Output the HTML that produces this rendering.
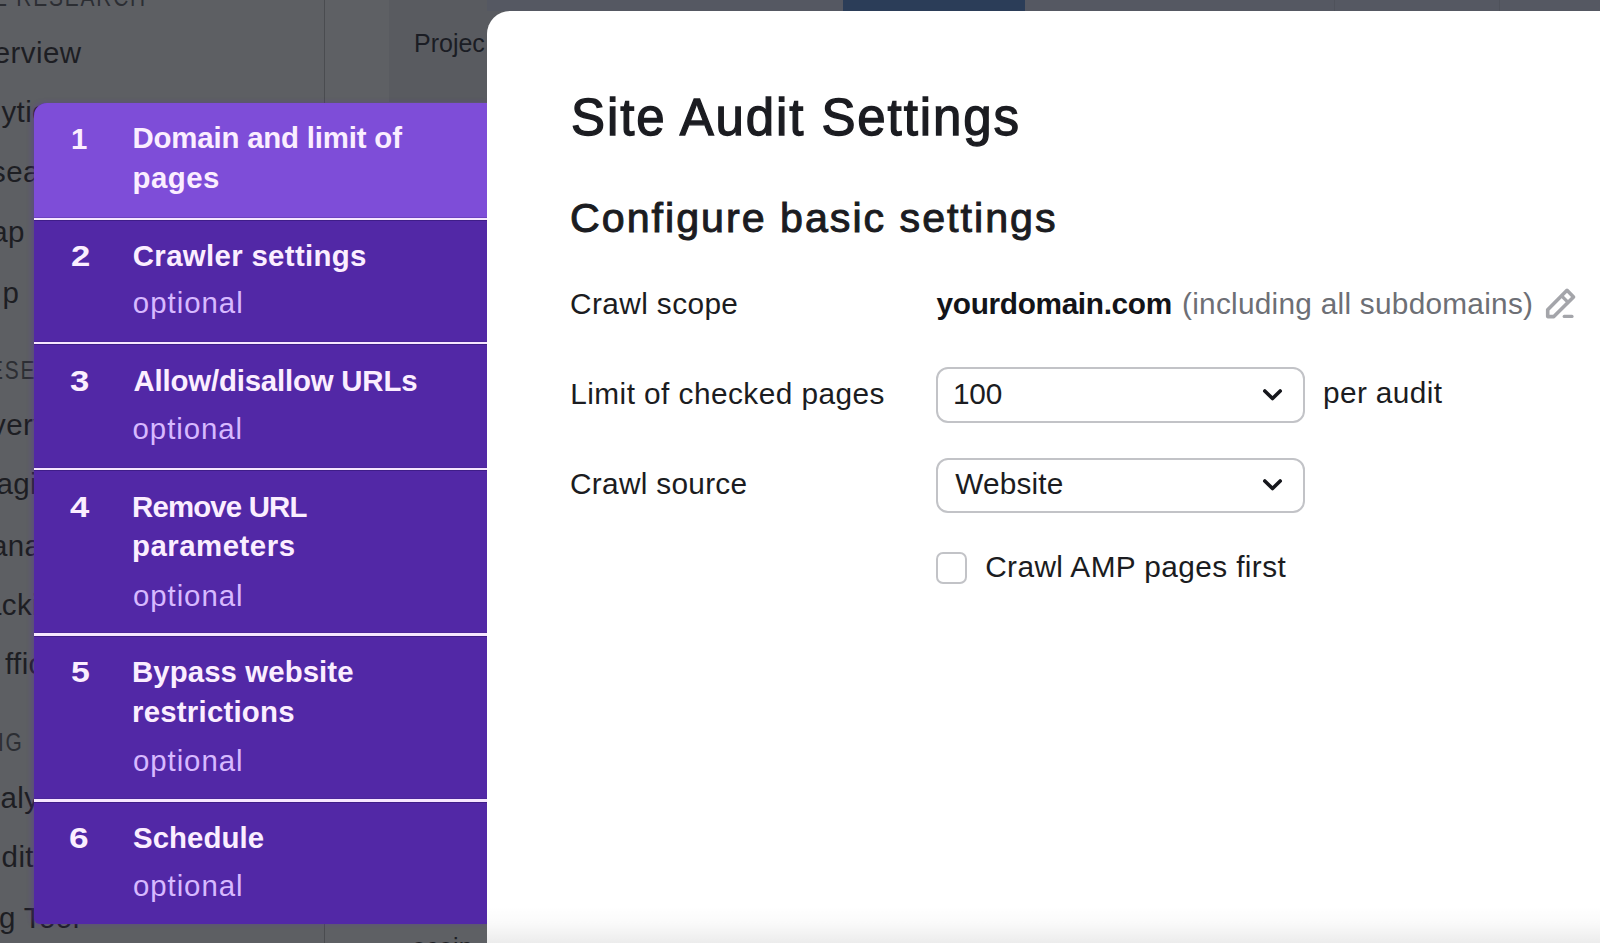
<!DOCTYPE html>
<html><head><meta charset="utf-8">
<style>
html,body{margin:0;padding:0;width:1600px;height:943px;overflow:hidden;background:#5d5f63;font-family:"Liberation Sans",sans-serif;}
.a{position:absolute;}
.t{position:absolute;line-height:1;white-space:nowrap;}
.nav{position:absolute;line-height:1;white-space:nowrap;color:#1c1d21;font-size:30px;letter-spacing:0.6px;}
.navh{position:absolute;line-height:1;white-space:nowrap;color:#424449;font-size:25px;letter-spacing:1.5px;}
.sep{position:absolute;left:34px;width:453px;height:2.6px;background:#f6e6ff;box-shadow:0 1px 0 rgba(40,15,100,0.45),0 -1px 0 rgba(60,30,120,0.25);}
</style></head>
<body>
<!-- background app (dimmed) -->
<div class="a" style="left:0;top:0;width:324px;height:943px;background:#5d5f63"></div>
<div class="a" style="left:324px;top:0;width:1.2px;height:943px;background:#4a4c50"></div>
<div class="a" style="left:325px;top:0;width:64px;height:943px;background:#5e6064"></div>
<div class="a" style="left:389px;top:0;width:1211px;height:102px;background:#595b60"></div>
<div class="a" style="left:325px;top:102px;width:1275px;height:841px;background:#5e6064"></div>
<div class="a" style="left:487px;top:0;width:1113px;height:11px;background:#555862"></div>
<div class="a" style="left:843px;top:0;width:182px;height:11px;background:#2b3d58"></div>
<div class="a" style="left:1334px;top:0;width:1px;height:11px;background:#4f525b"></div>
<div class="a" style="left:1499px;top:0;width:1px;height:11px;background:#4f525b"></div>
<div class="t" id="proj" style="left:414.00px;top:30.50px;font-size:25.00px;font-weight:400;color:#1b1d24;letter-spacing:0.000px;">Projec</div>

<div class="t" id="nvh0" style="left:-7.00px;top:-15.00px;font-size:25.50px;color:#2c2e33;letter-spacing:2.20px;transform:scaleX(0.82);transform-origin:0 0;">E RESEARCH</div>
<div class="t" id="nv1" style="left:-6.20px;top:37.81px;font-size:29.50px;color:#1d1e23;letter-spacing:0.40px;">erview</div>
<div class="t" id="nv2" style="left:1.40px;top:96.81px;font-size:29.50px;color:#1d1e23;letter-spacing:0.40px;">ytics</div>
<div class="t" id="nv3" style="left:-9.00px;top:157.01px;font-size:29.50px;color:#1d1e23;letter-spacing:0.40px;">search</div>
<div class="t" id="nv4" style="left:-8.80px;top:217.01px;font-size:29.50px;color:#1d1e23;letter-spacing:0.40px;">ap</div>
<div class="t" id="nv5" style="left:2.60px;top:277.51px;font-size:29.50px;color:#1d1e23;letter-spacing:0.40px;">p</div>
<div class="t" id="nvh1" style="left:-11.40px;top:357.81px;font-size:25.50px;color:#2c2e33;letter-spacing:2.20px;transform:scaleX(0.82);transform-origin:0 0;">ESEARCH</div>
<div class="t" id="nv6" style="left:-9.00px;top:410.31px;font-size:29.50px;color:#1d1e23;letter-spacing:0.40px;">verview</div>
<div class="t" id="nv7" style="left:-3.60px;top:469.01px;font-size:29.50px;color:#1d1e23;letter-spacing:0.40px;">agic</div>
<div class="t" id="nv8" style="left:-9.00px;top:530.51px;font-size:29.50px;color:#1d1e23;letter-spacing:0.40px;">anager</div>
<div class="t" id="nv9" style="left:-15.00px;top:589.81px;font-size:29.50px;color:#1d1e23;letter-spacing:0.40px;">acking</div>
<div class="t" id="nv10" style="left:5.00px;top:649.01px;font-size:29.50px;color:#1d1e23;letter-spacing:0.40px;">ffic</div>
<div class="t" id="nvh2" style="left:-1.60px;top:730.32px;font-size:25.50px;color:#2c2e33;letter-spacing:2.20px;transform:scaleX(0.82);transform-origin:0 0;">IG</div>
<div class="t" id="nv11" style="left:0.40px;top:783.01px;font-size:29.50px;color:#1d1e23;letter-spacing:0.40px;">alytics</div>
<div class="t" id="nv12" style="left:1.60px;top:842.40px;font-size:29.50px;color:#1d1e23;letter-spacing:0.40px;">dit</div>
<div class="t" id="nv13" style="left:-1.00px;top:902.71px;font-size:29.50px;color:#1d1e23;letter-spacing:0.40px;">g Tool</div>
<div class="t" id="nv14" style="left:412.00px;top:934.80px;font-size:25.00px;color:#1d1e23;letter-spacing:0.20px;">ocein</div>
<div class="a" style="left:324px;top:924px;width:1.2px;height:19px;background:#4a4c50"></div>

<!-- sidebar -->
<div class="a" style="left:34px;top:102.5px;width:453px;height:821px;background:#5228a6;border-radius:13px 0 0 6px;overflow:hidden;box-shadow:-2px 0 5px rgba(90,50,170,0.45)">
  <div class="a" style="left:0;top:0;width:453px;height:116px;background:#7e4dd8"></div>
</div>
<div class="sep" style="top:217.6px"></div>
<div class="sep" style="top:341.9px"></div>
<div class="sep" style="top:467.7px"></div>
<div class="sep" style="top:633.4px"></div>
<div class="sep" style="top:799.2px"></div>
<div class="t" id="n1" style="left:71.00px;top:123.76px;font-size:29.40px;font-weight:700;color:#fbeeff;letter-spacing:0.000px;">1</div>
<div class="t" id="t1a" style="left:132.50px;top:123.21px;font-size:29.40px;font-weight:700;color:#fbeeff;letter-spacing:-0.181px;">Domain and limit of</div>
<div class="t" id="t1b" style="left:132.50px;top:163.21px;font-size:29.40px;font-weight:700;color:#fbeeff;letter-spacing:0.500px;">pages</div>
<div class="t" id="n2" style="left:70.50px;top:241.01px;font-size:29.40px;font-weight:700;color:#fbeeff;letter-spacing:0.000px;transform:scaleX(1.18);transform-origin:0 0;">2</div>
<div class="t" id="t2" style="left:132.80px;top:241.01px;font-size:29.40px;font-weight:700;color:#fbeeff;letter-spacing:0.333px;">Crawler settings</div>
<div class="t" id="o2" style="left:132.80px;top:288.21px;font-size:29.40px;font-weight:400;color:#d7b9ff;letter-spacing:1.000px;">optional</div>
<div class="t" id="n3" style="left:70.20px;top:365.61px;font-size:29.40px;font-weight:700;color:#fbeeff;letter-spacing:0.000px;transform:scaleX(1.18);transform-origin:0 0;">3</div>
<div class="t" id="t3" style="left:133.60px;top:365.61px;font-size:29.40px;font-weight:700;color:#fbeeff;letter-spacing:-0.194px;">Allow/disallow URLs</div>
<div class="t" id="o3" style="left:132.60px;top:414.31px;font-size:29.40px;font-weight:400;color:#d7b9ff;letter-spacing:0.929px;">optional</div>
<div class="t" id="n4" style="left:69.80px;top:491.61px;font-size:29.40px;font-weight:700;color:#fbeeff;letter-spacing:0.000px;transform:scaleX(1.18);transform-origin:0 0;">4</div>
<div class="t" id="t4a" style="left:132.00px;top:491.61px;font-size:29.40px;font-weight:700;color:#fbeeff;letter-spacing:-0.833px;">Remove URL</div>
<div class="t" id="t4b" style="left:132.00px;top:531.21px;font-size:29.40px;font-weight:700;color:#fbeeff;letter-spacing:0.500px;">parameters</div>
<div class="t" id="o4" style="left:133.00px;top:580.61px;font-size:29.40px;font-weight:400;color:#d7b9ff;letter-spacing:0.929px;">optional</div>
<div class="t" id="n5" style="left:70.50px;top:656.61px;font-size:29.40px;font-weight:700;color:#fbeeff;letter-spacing:0.000px;transform:scaleX(1.15);transform-origin:0 0;">5</div>
<div class="t" id="t5a" style="left:132.00px;top:656.61px;font-size:29.40px;font-weight:700;color:#fbeeff;letter-spacing:0.077px;">Bypass website</div>
<div class="t" id="t5b" style="left:132.00px;top:696.91px;font-size:29.40px;font-weight:700;color:#fbeeff;letter-spacing:0.227px;">restrictions</div>
<div class="t" id="o5" style="left:133.00px;top:745.61px;font-size:29.40px;font-weight:400;color:#d7b9ff;letter-spacing:0.929px;">optional</div>
<div class="t" id="n6" style="left:68.80px;top:822.51px;font-size:29.40px;font-weight:700;color:#fbeeff;letter-spacing:0.000px;transform:scaleX(1.2);transform-origin:0 0;">6</div>
<div class="t" id="t6" style="left:133.00px;top:822.51px;font-size:29.40px;font-weight:700;color:#fbeeff;letter-spacing:0.071px;">Schedule</div>
<div class="t" id="o6" style="left:133.00px;top:871.26px;font-size:29.40px;font-weight:400;color:#d7b9ff;letter-spacing:0.929px;">optional</div>

<!-- modal panel -->
<div class="a" style="left:486.5px;top:11px;width:1200px;height:1000px;background:#fff;border-radius:23px 0 0 0;"></div>
<div class="a" style="left:487px;top:906px;width:1113px;height:37px;background:linear-gradient(to bottom,rgba(0,0,0,0) 0%,rgba(0,0,0,0.02) 45%,rgba(0,0,0,0.075) 100%)"></div>
<div class="t" id="title" style="left:571.00px;top:92.01px;font-size:51.00px;font-weight:400;color:#1b1c21;letter-spacing:1.889px;-webkit-text-stroke:1.3px #1b1c21;">Site Audit Settings</div>
<div class="t" id="sub" style="left:570.00px;top:198.00px;font-size:41.20px;font-weight:400;color:#1b1c21;letter-spacing:2.000px;-webkit-text-stroke:1.0px #1b1c21;">Configure basic settings</div>
<div class="t" id="lab1" style="left:570.00px;top:288.51px;font-size:29.80px;font-weight:400;color:#1b1c21;letter-spacing:0.400px;">Crawl scope</div>
<div class="t" id="lab2" style="left:570.20px;top:378.60px;font-size:29.80px;font-weight:400;color:#1b1c21;letter-spacing:0.452px;">Limit of checked pages</div>
<div class="t" id="lab3" style="left:570.00px;top:469.01px;font-size:29.80px;font-weight:400;color:#1b1c21;letter-spacing:0.295px;">Crawl source</div>
<div class="t" id="dom" style="left:936.60px;top:289.01px;font-size:29.80px;font-weight:700;color:#131419;letter-spacing:-0.346px;">yourdomain.com</div>
<div class="t" id="inc" style="left:1182.00px;top:289.01px;font-size:29.80px;font-weight:400;color:#6d6f75;letter-spacing:0.260px;">(including all subdomains)</div>
<div class="t" id="v100" style="left:953.00px;top:379.01px;font-size:29.80px;font-weight:400;color:#1b1c21;letter-spacing:-0.250px;">100</div>
<div class="t" id="per" style="left:1323.00px;top:378.31px;font-size:29.80px;font-weight:400;color:#1b1c21;letter-spacing:0.375px;">per audit</div>
<div class="t" id="web" style="left:955.20px;top:469.20px;font-size:29.80px;font-weight:400;color:#1b1c21;letter-spacing:0.167px;">Website</div>
<div class="t" id="amp" style="left:985.20px;top:552.01px;font-size:29.80px;font-weight:400;color:#1b1c21;letter-spacing:0.400px;">Crawl AMP pages first</div>

<!-- selects -->
<div class="a" style="left:935.5px;top:367px;width:369px;height:55.5px;border:2px solid #c2c3c7;border-radius:12px;box-sizing:border-box"></div>
<div class="a" style="left:935.5px;top:457.5px;width:369px;height:55.7px;border:2px solid #c2c3c7;border-radius:12px;box-sizing:border-box"></div>
<svg class="a" style="left:1250px;top:370px" width="40" height="140" viewBox="0 0 40 140">
  <path d="M14.8 20.9 L22.5 28.6 L30.2 20.9" fill="none" stroke="#16171c" stroke-width="3.6" stroke-linecap="round" stroke-linejoin="round"/>
  <path d="M14.8 110.9 L22.5 118.6 L30.2 110.9" fill="none" stroke="#16171c" stroke-width="3.6" stroke-linecap="round" stroke-linejoin="round"/>
</svg>
<!-- checkbox -->
<div class="a" style="left:935.5px;top:552px;width:31.5px;height:31.5px;border:2px solid #c2c3c7;border-radius:7px;box-sizing:border-box"></div>
<!-- pencil -->
<svg class="a" style="left:1540px;top:284px" width="40" height="40" viewBox="0 0 40 40">
  <path d="M7.7 32.6 L7.7 25.65 L27 6.35 L33.55 12.9 L13.85 32.6 Z" fill="none" stroke="#a4a5aa" stroke-width="3.6" stroke-linejoin="round"/>
  <path d="M21.6 11.8 L28.1 18.3" fill="none" stroke="#a4a5aa" stroke-width="3.2"/>
  <path d="M24.2 32.45 L32 32.45" fill="none" stroke="#a4a5aa" stroke-width="3.2" stroke-linecap="round"/>
</svg>
</body></html>
